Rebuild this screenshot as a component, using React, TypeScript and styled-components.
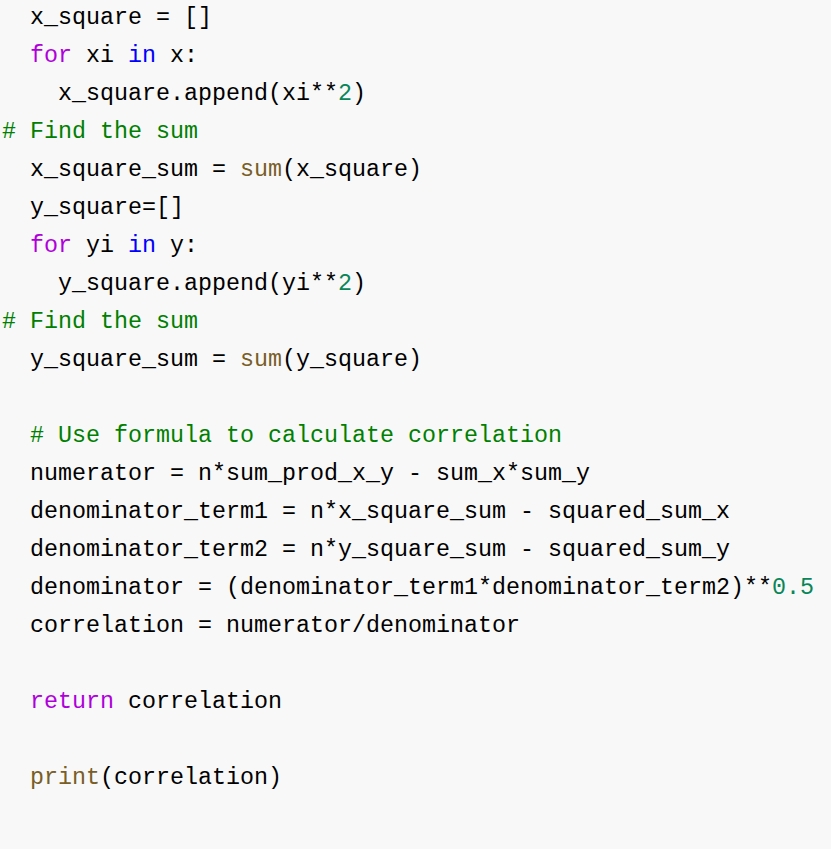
import React from "react";
import styled, { createGlobalStyle } from "styled-components";

const Global = createGlobalStyle`
  html, body { margin: 0; padding: 0; background: #f8f8f8; }
  body { width: 831px; height: 849px; overflow: hidden; }
`;

const Editor = styled.pre`
  margin: -1px 0 0 0;
  padding: 0 0 0 2px;
  background: #f8f8f8;
  color: #000000;
  font-family: "Liberation Mono", "DejaVu Sans Mono", monospace;
  font-size: 23.33px;
  line-height: 38px;
  white-space: pre;
  height: 850px;
`;

const Line = styled.div`
  height: 38px;
`;

type Kind = "kw" | "ctl" | "cm" | "num" | "fn";

const colors: Record<Kind, string> = {
  kw: "#af00db",
  ctl: "#0000ff",
  cm: "#008000",
  num: "#098658",
  fn: "#795e26",
};

const Tok = styled.span<{ $k: Kind }>`
  color: ${(p) => colors[p.$k]};
`;

type Seg = string | [Kind, string];

const lines: Seg[][] = [
  ["  x_square = []"],
  ["  ", ["kw", "for"], " xi ", ["ctl", "in"], " x:"],
  ["    x_square.append(xi**", ["num", "2"], ")"],
  [["cm", "# Find the sum"]],
  ["  x_square_sum = ", ["fn", "sum"], "(x_square)"],
  ["  y_square=[]"],
  ["  ", ["kw", "for"], " yi ", ["ctl", "in"], " y:"],
  ["    y_square.append(yi**", ["num", "2"], ")"],
  [["cm", "# Find the sum"]],
  ["  y_square_sum = ", ["fn", "sum"], "(y_square)"],
  [],
  ["  ", ["cm", "# Use formula to calculate correlation"]],
  ["  numerator = n*sum_prod_x_y - sum_x*sum_y"],
  ["  denominator_term1 = n*x_square_sum - squared_sum_x"],
  ["  denominator_term2 = n*y_square_sum - squared_sum_y"],
  ["  denominator = (denominator_term1*denominator_term2)**", ["num", "0.5"]],
  ["  correlation = numerator/denominator"],
  [],
  ["  ", ["kw", "return"], " correlation"],
  [],
  ["  ", ["fn", "print"], "(correlation)"],
];

export default function App() {
  return (
    <>
      <Global />
      <Editor>
        {lines.map((segs, i) => (
          <Line key={i}>
            {segs.map((s, j) =>
              typeof s === "string" ? (
                <React.Fragment key={j}>{s}</React.Fragment>
              ) : (
                <Tok key={j} $k={s[0]}>
                  {s[1]}
                </Tok>
              )
            )}
          </Line>
        ))}
      </Editor>
    </>
  );
}
